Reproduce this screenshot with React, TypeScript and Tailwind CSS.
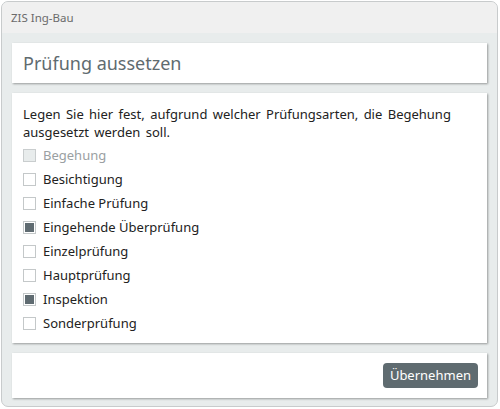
import React from "react";

type Item = { label: string; checked?: boolean; disabled?: boolean };

const items: Item[] = [
  { label: "Begehung", disabled: true },
  { label: "Besichtigung" },
  { label: "Einfache Prüfung" },
  { label: "Eingehende Überprüfung", checked: true },
  { label: "Einzelprüfung" },
  { label: "Hauptprüfung" },
  { label: "Inspektion", checked: true },
  { label: "Sonderprüfung" },
];

function CheckRow({ item }: { item: Item }) {
  return (
    <div className="flex h-6 items-center gap-[7px]">
      <span
        className={
          item.disabled
            ? "flex h-[13px] w-[13px] items-center justify-center border border-[#c9cdce] bg-[#e8ecec]"
            : "flex h-[13px] w-[13px] items-center justify-center border border-[#c4c8c9] bg-white"
        }
      >
        {item.checked && <span className="h-[9px] w-[9px] bg-[#5f6b71]" />}
      </span>
      <span className={item.disabled ? "text-[#9aa0a2]" : "text-[#222]"}>{item.label}</span>
    </div>
  );
}

export default function App() {
  return (
    <div className="relative h-[409px] w-[500px] overflow-hidden bg-white font-['Noto_Sans',sans-serif]">
      <div className="absolute left-[1px] top-[1px] flex h-[406px] w-[497px] flex-col overflow-hidden rounded-[7px] border border-[#c8cbcc] bg-[#e8ecec]">
        <div className="flex h-[31px] shrink-0 items-center bg-[#f0f0f0] pl-[9px] text-[11.5px] text-[#6b6b6b]">
          ZIS Ing-Bau
        </div>
        <div className="flex flex-1 flex-col gap-[10px] px-[10px] pt-[10px]">
          <div className="flex h-[40px] items-center bg-white pl-[11px] text-[18px] text-[#5f6b70] shadow-[1px_1px_2px_rgba(0,0,0,0.35)]">
            Prüfung aussetzen
          </div>
          <div className="flex h-[250px] flex-col bg-white px-[11px] pt-[12px] text-[13px] leading-[18px] shadow-[1px_1px_2px_rgba(0,0,0,0.35)]">
            <p className="mb-[2px] text-[#222] [word-spacing:2px]">
              Legen Sie hier fest, aufgrund welcher Prüfungsarten, die Begehung ausgesetzt werden soll.
            </p>
            {items.map((item) => (
              <CheckRow key={item.label} item={item} />
            ))}
          </div>
          <div className="flex h-[45px] items-center justify-end bg-white pr-[9px] shadow-[1px_1px_2px_rgba(0,0,0,0.35)]">
            <button className="h-[25px] rounded-[4px] bg-[#5f6b70] px-[7px] text-[13px] text-white">
              Übernehmen
            </button>
          </div>
        </div>
      </div>
    </div>
  );
}
